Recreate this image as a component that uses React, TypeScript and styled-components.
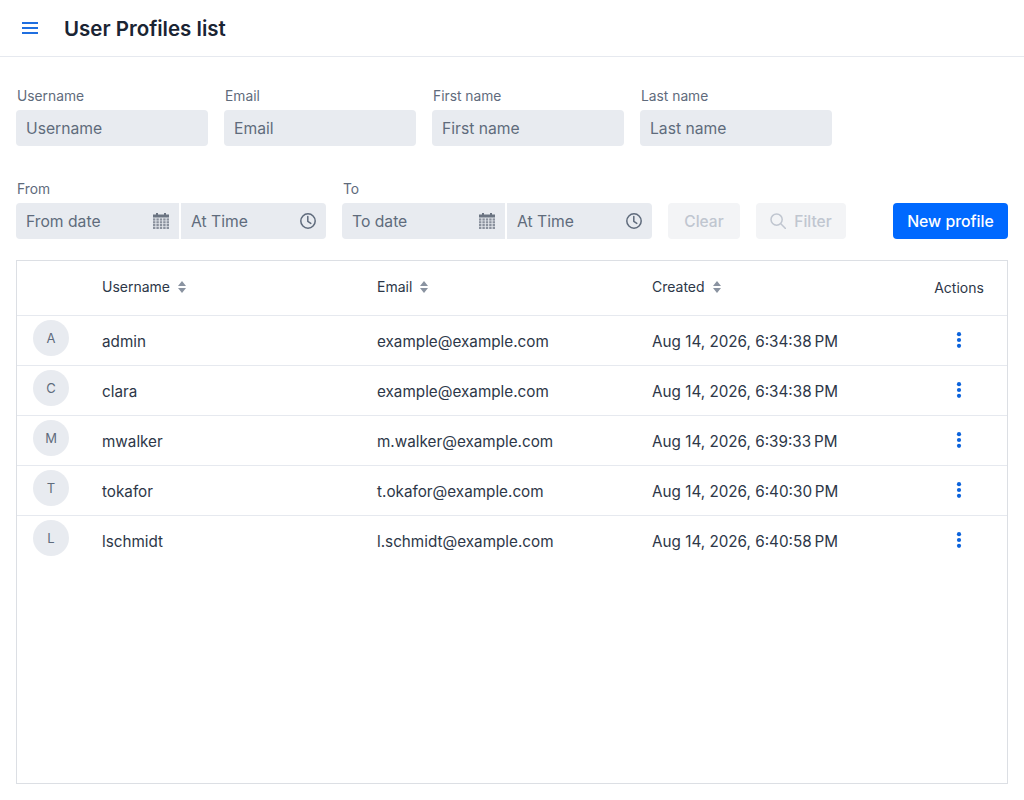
import React from "react";
import styled, { createGlobalStyle } from "styled-components";

const Global = createGlobalStyle`
  html, body { margin: 0; padding: 0; background: #fff; }
  body { font-family: Inter, "Liberation Sans", sans-serif; color: #1a202c; }
  * { box-sizing: border-box; }
`;

const Page = styled.div`
  width: 1024px;
  height: 800px;
  display: flex;
  flex-direction: column;
  overflow: hidden;
`;

const Header = styled.header`
  height: 57px;
  flex: none;
  display: flex;
  align-items: center;
  padding: 0 20px 0 22px;
  gap: 26px;
  border-bottom: 1px solid #e6e9ef;
`;

const Title = styled.h1`
  margin: 2px 0 0;
  font-size: 20.5px;
  line-height: 26px;
  font-weight: 600;
  color: #1a2433;
`;

const Main = styled.main`
  flex: 1;
  display: flex;
  flex-direction: column;
  padding: 31px 16px 16px;
  min-height: 0;
`;

const FilterRow = styled.div<{ $gap: number }>`
  display: flex;
  align-items: flex-end;
  gap: 16px;
  margin-bottom: ${(p) => p.$gap}px;
`;

const Field = styled.label`
  display: flex;
  flex-direction: column;
`;

const FieldLabel = styled.span`
  font-size: 13.8px;
  line-height: 17px;
  height: 17px;
  margin: 0 0 5px 1px;
  color: #5f6b7c;
`;

const TextBox = styled.div<{ $width: number }>`
  width: ${(p) => p.$width}px;
  height: 36px;
  display: flex;
  align-items: center;
  justify-content: space-between;
  padding: 0 10px;
  background: #e8ebf0;
  border-radius: 4px;
  font-size: 15.7px;
  color: #5f6b7c;
`;

const Pair = styled.div`
  display: flex;
  gap: 2px;
`;

const DateBox = styled(TextBox)`
  border-radius: 4px 0 0 4px;
`;

const TimeBox = styled(TextBox)`
  border-radius: 0 4px 4px 0;
`;

const GhostButton = styled.button<{ $width: number }>`
  width: ${(p) => p.$width}px;
  height: 36px;
  border: 0;
  border-radius: 4px;
  background: #f3f4f6;
  color: #c0c6d0;
  font: 500 15.5px Inter, sans-serif;
  display: flex;
  align-items: center;
  justify-content: center;
  gap: 8px;
  padding: 0;
`;

const PrimaryButton = styled.button`
  width: 115px;
  height: 36px;
  margin-left: auto;
  border: 0;
  border-radius: 4px;
  background: #0069ff;
  color: #fff;
  font: 500 15.8px Inter, sans-serif;
  padding: 0;
`;

const TableFrame = styled.div`
  flex: 1;
  border: 1px solid #dcdfe4;
  min-height: 0;
`;

const Table = styled.table`
  width: 100%;
  border-collapse: collapse;
  table-layout: fixed;
`;

const Th = styled.th<{ $width: number; $center?: boolean }>`
  width: ${(p) => p.$width}px;
  height: 54px;
  padding: 0 0 0 ${(p) => (p.$center ? 2 : 0)}px;
  font-size: 14px;
  font-weight: 400;
  color: #2d3748;
  text-align: ${(p) => (p.$center ? "center" : "left")};
  border-bottom: 1px solid #e6e9ef;
`;

const ThInner = styled.span`
  display: inline-flex;
  align-items: center;
  gap: 8px;
  position: relative;
  top: -1px;
`;

const Tr = styled.tr`
  height: 50px;
  border-bottom: 1px solid #e6e9ef;
  &:last-child { border-bottom: 0; }
`;

const Td = styled.td<{ $center?: boolean }>`
  padding: 2px 0 0;
  font-size: 15.25px;
  color: #2d3748;
  text-align: ${(p) => (p.$center ? "center" : "left")};
`;

const Avatar = styled.div`
  width: 36px;
  height: 36px;
  margin: 0 0 6px 16px;
  border-radius: 50%;
  background: #e8ebf0;
  color: #5f6b7c;
  font-size: 13px;
  display: flex;
  align-items: center;
  justify-content: center;
`;

const Kebab = styled.span`
  display: inline-flex;
  position: relative;
  left: 1px;
  top: 1px;
`;

const Menu = () => (
  <svg width="16" height="14" viewBox="0 0 16 14" aria-hidden="true">
    <g stroke="#1f6fe0" strokeWidth="2" fill="none">
      <path d="M0 2h16M0 7h16M0 12h16" />
    </g>
  </svg>
);

const CalendarIcon = () => (
  <svg width="16" height="16" viewBox="0 0 16 16" aria-hidden="true">
    <path d="M0 1.5h16v3H0z" fill="#6b7482" />
    <path d="M3 0h2v2H3zM11 0h2v2h-2z" fill="#6b7482" />
    <g fill="#8a919d">
      {[5.4, 8.2, 11, 13.8].map((y) =>
        [0, 3.4, 6.8, 10.2, 13.6].map((x) => <rect key={`${x}-${y}`} x={x} y={y} width="2.4" height="2.2" />)
      )}
    </g>
  </svg>
);

const ClockIcon = () => (
  <svg width="16" height="16" viewBox="0 0 16 16" fill="none" stroke="#5f6b7c" strokeWidth="1.5" aria-hidden="true">
    <circle cx="8" cy="8" r="7.2" />
    <path d="M7.8 3.6V8.4l3 2" strokeLinecap="round" strokeLinejoin="round" />
  </svg>
);

const SearchIcon = () => (
  <svg width="16" height="16" viewBox="0 0 16 16" fill="none" stroke="#c0c6d0" strokeWidth="1.5" aria-hidden="true">
    <circle cx="6.6" cy="6.6" r="5.6" />
    <path d="M10.8 10.8 15.6 15.6" strokeLinecap="round" />
  </svg>
);

const SortIcon = () => (
  <svg width="8" height="12" viewBox="0 0 8 12" aria-hidden="true">
    <path d="M4 0 8 5H0zM4 12 0 7h8z" fill="#8a93a1" />
  </svg>
);

const DotsIcon = () => (
  <svg width="6" height="16" viewBox="0 0 6 16" aria-hidden="true">
    <g fill="#0b63dc">
      <circle cx="3" cy="2.2" r="2.1" />
      <circle cx="3" cy="8" r="2.1" />
      <circle cx="3" cy="13.8" r="2.1" />
    </g>
  </svg>
);

const filters = ["Username", "Email", "First name", "Last name"];
const rows = [
  ["A", "admin", "example@example.com", "Aug 14, 2026, 6:34:38\u202fPM"],
  ["C", "clara", "example@example.com", "Aug 14, 2026, 6:34:38\u202fPM"],
  ["M", "mwalker", "m.walker@example.com", "Aug 14, 2026, 6:39:33\u202fPM"],
  ["T", "tokafor", "t.okafor@example.com", "Aug 14, 2026, 6:40:30\u202fPM"],
  ["L", "lschmidt", "l.schmidt@example.com", "Aug 14, 2026, 6:40:58\u202fPM"],
];

const DateTime = ({ label, placeholder }: { label: string; placeholder: string }) => (
  <Field>
    <FieldLabel>{label}</FieldLabel>
    <Pair>
      <DateBox $width={163}>
        {placeholder}
        <CalendarIcon />
      </DateBox>
      <TimeBox $width={145}>
        At Time
        <ClockIcon />
      </TimeBox>
    </Pair>
  </Field>
);

export default function App() {
  return (
    <Page>
      <Global />
      <Header>
        <Menu />
        <Title>User Profiles list</Title>
      </Header>
      <Main>
        <FilterRow $gap={35}>
          {filters.map((f) => (
            <Field key={f}>
              <FieldLabel>{f}</FieldLabel>
              <TextBox $width={192}>{f}</TextBox>
            </Field>
          ))}
        </FilterRow>
        <FilterRow $gap={21}>
          <DateTime label="From" placeholder="From date" />
          <DateTime label="To" placeholder="To date" />
          <GhostButton $width={72}>Clear</GhostButton>
          <GhostButton $width={90}>
            <SearchIcon />
            Filter
          </GhostButton>
          <PrimaryButton>New profile</PrimaryButton>
        </FilterRow>
        <TableFrame>
          <Table>
            <thead>
              <tr>
                <Th $width={85} />
                <Th $width={275}>
                  <ThInner>
                    Username
                    <SortIcon />
                  </ThInner>
                </Th>
                <Th $width={275}>
                  <ThInner>
                    Email
                    <SortIcon />
                  </ThInner>
                </Th>
                <Th $width={257}>
                  <ThInner>
                    Created
                    <SortIcon />
                  </ThInner>
                </Th>
                <Th $width={98} $center>
                  Actions
                </Th>
              </tr>
            </thead>
            <tbody>
              {rows.map(([initial, user, email, created]) => (
                <Tr key={user}>
                  <Td>
                    <Avatar>{initial}</Avatar>
                  </Td>
                  <Td>{user}</Td>
                  <Td>{email}</Td>
                  <Td>{created}</Td>
                  <Td $center>
                    <Kebab>
                      <DotsIcon />
                    </Kebab>
                  </Td>
                </Tr>
              ))}
            </tbody>
          </Table>
        </TableFrame>
      </Main>
    </Page>
  );
}
